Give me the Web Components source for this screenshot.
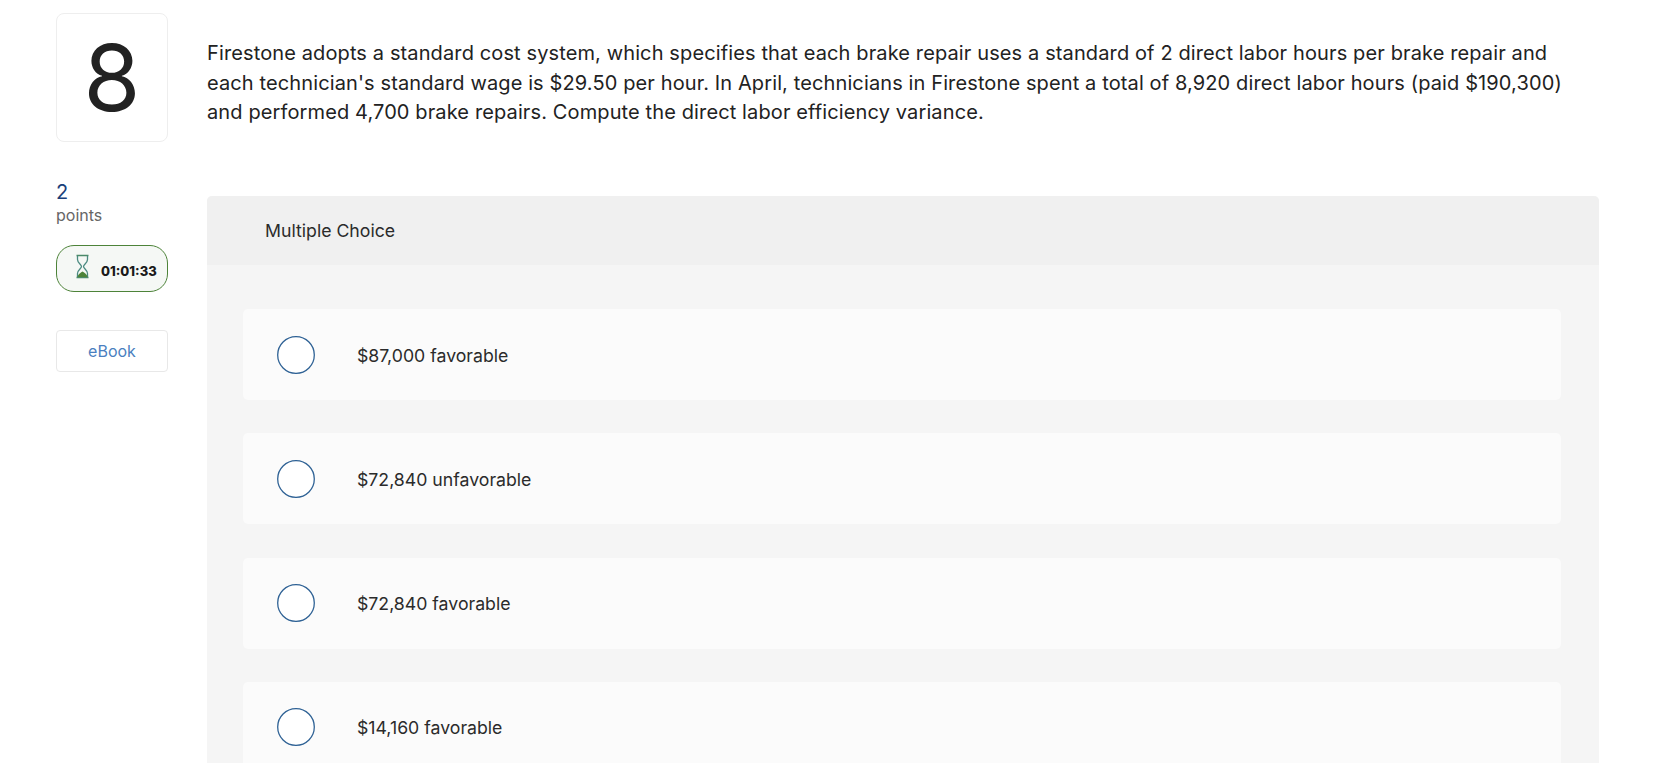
<!DOCTYPE html>
<html>
<head>
<meta charset="utf-8">
<title>Question 8</title>
<style>
    html, body { margin: 0; padding: 0; background: #fff; overflow: hidden; height: 763px; }
    body { font-family: 'Inter', 'Liberation Sans', sans-serif; color: #222; }
</style>
</head>
<body>
<question-page></question-page>

<template id="side-tpl">
    <style>
        :host { display: block; width: 112px; flex: none; }
        .num {
            height: 129px; box-sizing: border-box; border: 1px solid #eee; border-radius: 8px;
            display: flex; align-items: center; justify-content: center;
            font-size: 92px; font-weight: 380; color: #222; line-height: 1; padding-top: 1px;
        }
        .pts { margin-top: 39px; font-size: 20px; line-height: 22px; color: #1b3f7a; }
        .lbl { font-size: 16px; line-height: 24px; color: #666; }
        .timer {
            margin-top: 18px; height: 47px; box-sizing: border-box;
            border: 1px solid #4d8339; border-radius: 18px; background: #f5f8f5;
            display: flex; align-items: center; gap: 11px; padding-left: 18px;
            font-size: 13px; font-weight: 800; color: #1a1a1a;
        }
        .timer svg { display: block; margin-top: -5px; }
        .timer span { padding-top: 4px; }
        .book {
            margin-top: 38px; height: 42px; box-sizing: border-box;
            border: 1px solid #e8e8e8; border-radius: 4px;
            display: flex; align-items: center; justify-content: center;
            font-size: 16px; color: #4a7fc0;
        }
    </style>
    <div class="num">8</div>
    <div class="pts">2</div>
    <div class="lbl">points</div>
    <div class="timer">
        <svg width="15" height="25" viewBox="0 0 15 25" fill="none">
            <path d="M1.500 1.500h12M1.500 23.500h12" stroke="#4b8a6a" stroke-width="1.600"/>
            <path d="M2.500 2v3.500c0 3.500 4 5 4 7s-4 3.500-4 7V23M12.500 2v3.500c0 3.500-4 5-4 7s4 3.500 4 7V23" stroke="#4a8a80" stroke-width="1.300"/>
            <path d="M2.500 23c.3-2.500 3-4.500 5-5.500 2 1 4.700 3 5 5.500z" fill="#4d8339"/>
        </svg>
        <span>01:01:33</span>
    </div>
    <div class="book">eBook</div>
</template>

<template id="choice-tpl">
    <style>
        :host {
            display: flex; align-items: center; height: 91px; flex: none;
            background: #fbfbfb; border-radius: 5px;
        }
        svg { display: block; flex: none; margin-left: 34px; }
        .txt { margin-left: 42px; font-size: 17.700px; color: #2b2b2b; margin-top: 1px; }
    </style>
    <svg width="38" height="38" viewBox="0 0 38 38">
        <circle cx="19" cy="19" r="18.300" fill="#fff" stroke="#2f6295" stroke-width="1.300"/>
    </svg>
    <div class="txt"><slot></slot></div>
</template>

<template id="panel-tpl">
    <style>
        :host { display: block; background: #f5f5f5; border-radius: 5px 5px 0 0; margin-top: 52px; }
        .head {
            height: 69px; background: #f0f0f0; border-radius: 5px 5px 0 0;
            display: flex; align-items: center; padding-left: 58px;
            font-size: 17.700px; color: #2b2b2b;
        }
        .list { display: flex; flex-direction: column; gap: 33.330px; padding: 44px 38px 0 36px; }
    </style>
    <div class="head"><slot name="title"></slot></div>
    <div class="list"><slot></slot></div>
</template>

<template id="page-tpl">
    <style>
        :host { display: flex; gap: 39px; padding: 13px 74px 0 56px; }
        .main { flex: 1; min-width: 0; }
        .q {
            padding-top: 26px; height: 105px; max-width: 1365px;
            font-size: 20px; letter-spacing: 0.120px; line-height: 29.500px; color: #222;
        }
    </style>
    <side-column></side-column>
    <div class="main">
        <div class="q">Firestone adopts a standard cost system, which specifies that each brake repair uses a standard of 2 direct labor hours per brake repair and each technician's standard wage is $29.50 per hour. In April, technicians in Firestone spent a total of 8,920 direct labor hours (paid $190,300) and performed 4,700 brake repairs. Compute the direct labor efficiency variance.</div>
        <choice-panel>
            <span slot="title">Multiple Choice</span>
            <choice-row>$87,000 favorable</choice-row>
            <choice-row>$72,840 unfavorable</choice-row>
            <choice-row>$72,840 favorable</choice-row>
            <choice-row>$14,160 favorable</choice-row>
        </choice-panel>
    </div>
</template>

<script>
    function fromTemplate(id) {
        return document.getElementById(id).content.cloneNode(true);
    }

    class SideColumn extends HTMLElement {
        constructor() {
            super();
            this.attachShadow({ mode: 'open' }).appendChild(fromTemplate('side-tpl'));
        }
    }
    class ChoiceRow extends HTMLElement {
        constructor() {
            super();
            this.attachShadow({ mode: 'open' }).appendChild(fromTemplate('choice-tpl'));
        }
    }
    class ChoicePanel extends HTMLElement {
        constructor() {
            super();
            this.attachShadow({ mode: 'open' }).appendChild(fromTemplate('panel-tpl'));
        }
    }
    class QuestionPage extends HTMLElement {
        constructor() {
            super();
            this.attachShadow({ mode: 'open' }).appendChild(fromTemplate('page-tpl'));
        }
    }

    customElements.define('side-column', SideColumn);
    customElements.define('choice-row', ChoiceRow);
    customElements.define('choice-panel', ChoicePanel);
    customElements.define('question-page', QuestionPage);
</script>
</body>
</html>
